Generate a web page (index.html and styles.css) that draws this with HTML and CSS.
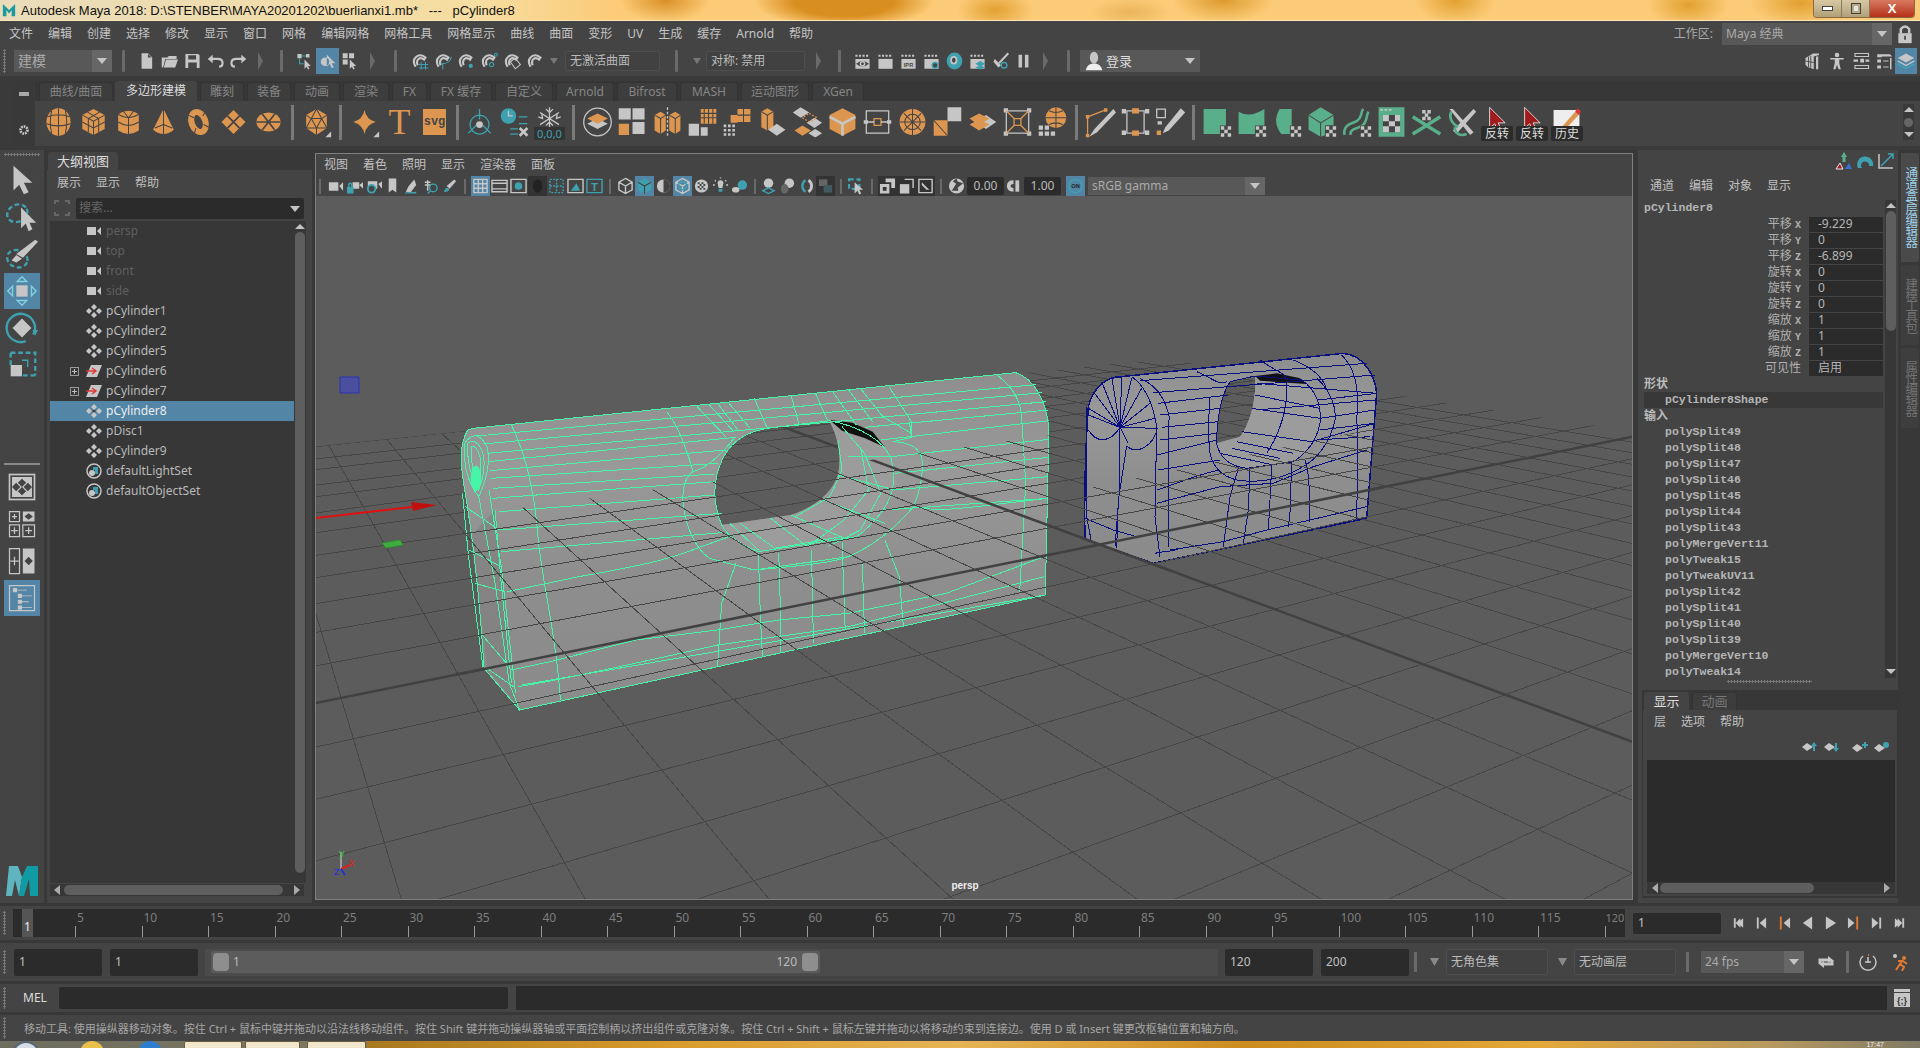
FILE: index.html
```html
<!DOCTYPE html>
<html lang="zh">
<head>
<meta charset="utf-8">
<title>Autodesk Maya 2018</title>
<link rel="stylesheet" href="styles.css">
</head>
<body>
<svg class="defs" aria-hidden="true">
<defs>
<symbol id="sphere" viewBox="0 0 36 36"><ellipse class="o" cx="18" cy="18" rx="14" ry="16"/><path class="d" d="M5 12Q18 7 31 12M4 20Q18 25 32 20M18 2V34M10 5Q7 18 10 31M26 5Q29 18 26 31"/></symbol>
<symbol id="cube" viewBox="0 0 36 36"><path class="o" d="M18 3L31 10V26L18 33L5 26V10Z"/><path class="d" d="M5 10L18 17L31 10M18 17V33M11 6.5L24 14V30M25 6.5L12 14V30M5 18L18 25L31 18"/></symbol>
<symbol id="cyl" viewBox="0 0 36 36"><path class="o" d="M6 9Q18 1 30 9V28Q18 36 6 28Z"/><path class="d" d="M6 9Q18 17 30 9M6 18Q18 26 30 18M18 13V32M11 4L18 13L25 4"/></symbol>
<symbol id="cone" viewBox="0 0 36 36"><path class="o" d="M18 3L30 27Q18 37 6 27Z"/><path class="d" d="M18 3V32M18 21L8 25M18 21L28 25"/></symbol>
<symbol id="torus" viewBox="0 0 36 36"><ellipse class="os" cx="18" cy="18" rx="8" ry="12" transform="rotate(-20 18 18)"/><path class="d" d="M6 10L13 13M27 4L23 11M30 24L24 21M13 32L15 25"/></symbol>
<symbol id="plane" viewBox="0 0 36 36"><path class="o" d="M18 4L32 18L18 32L4 18Z"/><path class="d2" d="M11 11L25 25M25 11L11 25"/></symbol>
<symbol id="disc" viewBox="0 0 36 36"><ellipse class="o" cx="18" cy="18" rx="14" ry="11"/><path class="d2" d="M4 18H32M18 18L11 9M18 18L25 9M18 18L11 27M18 18L25 27"/></symbol>
<symbol id="plato" viewBox="0 0 36 36"><path class="o" d="M18 3L30 10V25L18 33L6 25V10Z"/><path class="d" d="M18 3L12 14H24ZM6 10L12 14M30 10L24 14M12 14L18 25L24 14M6 25H30M12 14L6 25M24 14L30 25M18 25V33"/><path class="w" d="M35 29V36H28Z"/></symbol>
<symbol id="star" viewBox="0 0 36 36"><path class="o" d="M18 4Q20 15 31 18Q20 21 18 32Q16 21 5 18Q16 15 18 4Z"/><path class="w" d="M35 29V36H28Z"/></symbol>
<symbol id="manip" viewBox="0 0 36 36"><path class="t2" d="M18 3V15M14 22L5 31M22 22L31 31"/><circle class="t2" cx="18" cy="21" r="11"/><circle class="w" cx="18" cy="21" r="4"/></symbol>
<symbol id="clockx" viewBox="0 0 36 36"><circle class="t" cx="11" cy="11" r="9"/><path class="ws" d="M11 5V11H16"/><path class="t2" d="M23 12H33M23 20H33M13 26H22M13 32H22"/><path class="w3" d="M24 25L33 34M33 25L24 34"/></symbol>
<symbol id="snow" viewBox="0 0 36 36"><path class="ws" d="M18 1V24M7 7L29 21M29 7L7 21M14 3L18 7L22 3M14 22L18 18L22 22M5 12L10 14L9 9M31 12L26 14L27 9"/></symbol>
<symbol id="combine" viewBox="0 0 36 36"><circle class="ws" cx="18" cy="18" r="16"/><path class="w" d="M18 14L30 20L18 26L6 20Z"/><path class="o" d="M18 8L30 14L18 20L6 14Z"/></symbol>
<symbol id="sep3" viewBox="0 0 36 36"><path class="w" d="M18 2h14v13H18zM2 2h14v13H2zM18 18h14v14H18z"/><path class="o" d="M2 20h12v13H2z"/></symbol>
<symbol id="smooth" viewBox="0 0 36 36"><path class="o" d="M3 10L10 6L16 10V28L10 32L3 28ZM20 10L27 6L33 10V28L27 32L20 28Z"/><path class="d" d="M3 10L10 14L16 10M10 14V32M20 10L27 14L33 10M27 14V32"/><path class="ws" stroke-dasharray="3 2" d="M18 1V35"/></symbol>
<symbol id="subdiv" viewBox="0 0 36 36"><path class="o" d="M16 3H34V20H16Z"/><path class="d" d="M20 3V20M25 3V20M30 3V20M16 8H34M16 13H34"/><path class="w" d="M2 20h12v14H2zM16 24h8v10h-8z"/></symbol>
<symbol id="tri" viewBox="0 0 36 36"><path class="o" d="M18 3H33V18H18ZM10 10H18V19H10Z"/><path class="d" d="M25 3V18M18 10H33"/><path class="w" d="M2 21h3v3H2zM7 21h3v3H7zM12 21h3v3h-3zM2 26h3v3H2zM7 26h3v3H7zM12 26h3v3h-3zM2 31h3v3H2zM7 31h3v3H7zM12 31h3v3h-3z"/></symbol>
<symbol id="extrude" viewBox="0 0 36 36"><path class="o" d="M5 6L12 2L19 6V24L12 28L5 24Z"/><path class="d" d="M5 6L12 10L19 6M12 10V28"/><path class="w" d="M23 20L33 27L23 34L13 27Z"/></symbol>
<symbol id="bridge" viewBox="0 0 36 36"><path class="w" d="M10 1L20 7L10 13L1 7Z"/><path class="o" d="M12 22L22 28L12 34L3 28Z"/><path class="w" d="M26 13L35 19L26 25L17 19ZM27 26L35 31L27 36L19 31Z"/><path class="ot" stroke-dasharray="2 2" d="M20 8L29 13L20 18L12 13Z"/></symbol>
<symbol id="bevel" viewBox="0 0 36 36"><path class="o" d="M18 2L33 10V26L18 34L3 26V10Z"/><path class="w3" d="M3 12L18 20L33 12M18 20V34"/></symbol>
<symbol id="boxc" viewBox="0 0 36 36"><path class="ws" d="M5 5H31V31H5Z"/><path class="w" d="M2 16h5v4H2zM29 16h5v4h-5z"/><path class="ot" d="M14 14h8v8h-8z"/><path class="ws" d="M7 18H14M22 18H29"/></symbol>
<symbol id="discx" viewBox="0 0 36 36"><circle class="o" cx="18" cy="18" r="15"/><path class="d" d="M3 18H33M18 3V33M8 8L28 28M28 8L8 28"/><circle class="d" cx="18" cy="18" r="9"/></symbol>
<symbol id="poke" viewBox="0 0 36 36"><path class="w" d="M18 1H34V17H18ZM18 1L34 17Z"/><path class="o" d="M2 16H18V34H2Z"/><path class="d" d="M2 16L18 34"/></symbol>
<symbol id="wedge" viewBox="0 0 36 36"><path class="w" d="M22 10L34 18L22 26L10 18Z"/><path class="o" d="M14 8L26 14L14 22L3 14ZM14 15L26 21L14 28L3 21Z"/></symbol>
<symbol id="xbox" viewBox="0 0 36 36"><path class="ws" d="M5 5H31V31H5Z"/><path class="w" d="M2 2h5v5H2zM29 2h5v5h-5zM2 29h5v5H2zM29 29h5v5h-5z"/><path class="ot" d="M5 5L14 14M31 5L22 14M5 31L14 22M31 31L22 22M14 14h8v8h-8z"/></symbol>
<symbol id="ballgrid" viewBox="0 0 36 36"><circle class="o" cx="22" cy="13" r="12"/><path class="d" d="M10 13H34M22 1V25M14 5Q22 9 30 5M14 21Q22 17 30 21"/><path class="w" d="M2 22h5v5H2zM9 22h5v5H9zM2 29h5v5H2zM9 29h5v5H9zM16 29h5v5h-5z"/></symbol>
<symbol id="knife" viewBox="0 0 36 36"><path class="ot" d="M3 12L24 4M3 12V34"/><path class="o" d="M1 10h4v4H1zM22 2h4v4h-4zM1 32h4v4H1z"/><path class="w" d="M33 3L36 7L14 30L5 35L11 26Z"/></symbol>
<symbol id="loopc" viewBox="0 0 36 36"><path class="ws" d="M8 5H28V31H8Z"/><path class="w" d="M2 3h5v5H2zM29 3h5v5h-5zM2 28h5v5H2zM29 28h5v5h-5z"/><path class="o" d="M14 2h8v6h-8zM14 28h8v6h-8z"/></symbol>
<symbol id="pencil" viewBox="0 0 36 36"><path class="w" d="M30 2L35 7L16 28L9 31L12 24Z"/><path class="ws" d="M2 3H12V13H2Z"/><path class="o" d="M2 28h5v5H2z"/><path class="w" d="M3 17h5v4H3z"/></symbol>
<symbol id="gquad" viewBox="0 0 36 36"><path class="g" d="M3 3H29V32H3Z"/><use href="#chk"/></symbol>
<symbol id="gcurve" viewBox="0 0 36 36"><path class="g" d="M3 6Q16 14 33 3V32H3Z"/><use href="#chk"/></symbol>
<symbol id="gsplit" viewBox="0 0 36 36"><path class="g" d="M10 3Q1 18 12 32H24V3Z"/><use href="#chk"/></symbol>
<symbol id="gcube" viewBox="0 0 36 36"><path class="g" d="M17 1L32 10V22H23V33L17 35L3 27V10Z"/><path class="d" d="M3 10L17 19L32 10M17 19V35"/><use href="#chk"/></symbol>
<symbol id="gwave" viewBox="0 0 36 36"><path class="gs" d="M4 33C2 20 14 20 18 17C26 12 22 6 26 3M11 33C10 25 20 26 25 22C31 17 29 10 32 6"/><use href="#chk"/></symbol>
<symbol id="gchk" viewBox="0 0 36 36"><path class="g" d="M3 1H33V35H3Z"/><path class="dk" d="M8 10H28V30H8Z"/><path class="w" d="M8 10h7v7H8zM22 10h6v7h-6zM15 17h7v6h-7zM8 23h7v7H8zM22 23h6v7h-6zM5 3h3v2H5zM10 3h3v2h-3zM15 3h3v2h-3z"/></symbol>
<symbol id="gx" viewBox="0 0 36 36"><path class="gs3" d="M2 12L18 22L34 12M2 32L18 22L34 32"/><path class="w" d="M13 4h4v4h-4zM19 4h4v4h-4zM16 8h4v4h-4zM13 12h4v4h-4zM19 12h4v4h-4z"/></symbol>
<symbol id="needle" viewBox="0 0 36 36"><path class="w" d="M32 3L35 6L12 32L8 28Z"/><path class="w" d="M4 3L8 3L32 30L28 33Z"/><path class="gs" d="M6 6Q2 16 14 24M10 24Q12 36 24 32"/></symbol>
<symbol id="redc" viewBox="0 0 36 36"><path class="rc" d="M10 1L10 25L16 20L20 30L24 28L20 19L28 19Z"/></symbol>
<symbol id="hist" viewBox="0 0 36 36"><path class="pg" d="M3 4H33V25L27 31H3Z"/><path class="o" d="M14 22L28 6L32 10L18 25L12 27Z"/><path class="rd" d="M28 6L31 2L35 6L32 10Z"/></symbol>

<symbol id="t-new" viewBox="0 0 24 24"><path class="w" d="M5 1h9l6 6v16H5z"/><path class="dk" d="M14 2v5h5z"/></symbol>
<symbol id="t-open" viewBox="0 0 24 24"><path class="w" d="M1 7h8l2-2h11v4H6L3 21H1zM7 10h17l-4 11H4z"/></symbol>
<symbol id="t-save" viewBox="0 0 24 24"><path class="w" d="M2 2h18l2 2v18H2z"/><path class="dk" d="M6 4h11v6H6zM6 14h12v8H6z"/></symbol>
<symbol id="t-undo" viewBox="0 0 24 24"><path class="w3" d="M6 9H15Q22 9 22 15Q22 20 17 20"/><path class="w" d="M1 9L8 3V15Z"/></symbol>
<symbol id="t-redo" viewBox="0 0 24 24"><path class="w3" d="M18 9H9Q2 9 2 15Q2 20 7 20"/><path class="w" d="M23 9L16 3V15Z"/></symbol>
<symbol id="t-hier" viewBox="0 0 24 24"><path class="w" d="M2 2h6v6H2zM14 2h5v5h-5zM12 10v13l3-3 2 4 2-1-2-4h4z"/><path class="t2" d="M8 5h6M5 8v8h6" /></symbol>
<symbol id="t-obj" viewBox="0 0 24 24"><path class="w" d="M9 7A6 6 0 1 1 8 19A6 6 0 0 1 9 7ZM11 3v17l4-4 3 6 3-1-3-6h5z"/></symbol>
<symbol id="t-comp" viewBox="0 0 24 24"><path class="w" d="M1 1h7v7H1zM10 1h7v7h-7zM1 10h7v7H1zM11 10v13l3-3 2 4 2-1-2-4h4z"/></symbol>
<symbol id="magnet" viewBox="0 0 24 24"><path class="w3" d="M5 20C-2 8 10 -1 19 7L17 10C11 5 5 10 8 18"/></symbol>
<symbol id="s-grid" viewBox="0 0 24 24"><use href="#magnet"/><path class="t2" d="M10 17H23M10 22H23M13 13V24M19 13V24"/></symbol>
<symbol id="s-curve" viewBox="0 0 24 24"><use href="#magnet"/><path class="t2" d="M8 16Q22 16 23 6M11 16V24"/></symbol>
<symbol id="s-pt" viewBox="0 0 24 24"><use href="#magnet"/><circle class="t" cx="18" cy="19" r="3"/></symbol>
<symbol id="s-view" viewBox="0 0 24 24"><use href="#magnet"/><circle class="t2" cx="15" cy="17" r="3"/><circle class="t2" cx="21" cy="3" r="2"/></symbol>
<symbol id="s-plane" viewBox="0 0 24 24"><use href="#magnet"/><path class="ws" d="M9 13L16 8L23 17L16 23Z"/></symbol>
<symbol id="s-live" viewBox="0 0 24 24"><use href="#magnet"/></symbol>
<symbol id="r-base" viewBox="0 0 24 24"><path class="w" d="M2 9H22V23H2Z"/><path class="w" d="M2 3h3v3H2zM7 3h3v3H7zM12 3h3v3h-3zM17 3h3v3h-3z"/></symbol>
<symbol id="r-eye" viewBox="0 0 24 24"><use href="#r-base"/><path class="dk" d="M3 16Q12 8 21 16Q12 24 3 16Z"/><circle class="w" cx="12" cy="16" r="4"/><circle class="dk" cx="12" cy="16" r="2"/></symbol>
<symbol id="r-ipr" viewBox="0 0 24 24"><use href="#r-base"/><text class="iprt" x="12" y="20" text-anchor="middle">IPR</text></symbol>
<symbol id="r-gear" viewBox="0 0 24 24"><use href="#r-base"/><circle class="t2b" cx="17" cy="18" r="4"/></symbol>
<symbol id="r-lens" viewBox="0 0 24 24"><ellipse class="t" cx="12" cy="12" rx="11" ry="12"/><ellipse class="w" cx="11" cy="11" rx="5" ry="6"/><ellipse class="dk" cx="11" cy="11" rx="2.5" ry="3.5"/></symbol>
<symbol id="r-layer" viewBox="0 0 24 24"><use href="#r-base"/><path class="t" d="M16 12L23 16L16 20L9 16ZM16 18L23 21L16 24L9 21Z"/></symbol>
<symbol id="r-brush" viewBox="0 0 24 24"><path class="w3" d="M23 1L10 15"/><path class="w" d="M4 9L13 18L9 21L2 13Z"/><circle class="t2b" cx="17" cy="18" r="4"/></symbol>
<symbol id="r-pause" viewBox="0 0 24 24"><path class="w" d="M5 3h5v18H5zM14 3h5v18h-5z"/></symbol>
<symbol id="r-user" viewBox="0 0 24 24"><ellipse class="w" cx="12" cy="8" rx="5" ry="7"/><path class="pg" d="M2 23Q4 16 10 15H14Q20 16 22 23Z"/></symbol>
<symbol id="r-lock" viewBox="0 0 24 24"><path class="w3" d="M7 11V6Q12 0 17 6V11"/><path class="w" d="M4 11H20V23H4Z"/><path class="dk" d="M11 14h2v5h-2z"/></symbol>
<symbol id="u-model" viewBox="0 0 24 24"><path class="w" d="M2 8L12 2H20V4L13 6V23L5 20L2 17ZM16 6h3v17h-3z"/><path class="d" d="M2 12L13 14M6 6V20M9 5V21"/></symbol>
<symbol id="u-man" viewBox="0 0 24 24"><circle class="w" cx="12" cy="4" r="3"/><path class="w" d="M3 8H21V10H15V15L17 23H14L12 17L10 23H7L9 15V10H3Z"/></symbol>
<symbol id="u-chan" viewBox="0 0 24 24"><path class="ws" d="M4 2H22V6H4ZM4 18H22V22H4Z"/><path class="w" d="M2 10h6v3H2zM11 9h5v5h-5zM18 10h5v3h-5z"/></symbol>
<symbol id="u-attr" viewBox="0 0 24 24"><path class="w" d="M3 3H20L23 6H9V7H3ZM3 10h5v4H3zM3 18h5v4H3zM20 8h2v15h-2z"/><path class="ws" d="M11 12H18M11 20H18"/></symbol>
<symbol id="u-lay" viewBox="0 0 24 24"><path class="w" d="M12 2L23 8L12 14L1 8Z"/><path class="w" d="M1 11L12 17L23 11V13L12 19L1 13Z"/><path class="t3" d="M1 16L12 22L23 16"/></symbol>

<symbol id="l-arrow" viewBox="0 0 36 36"><path class="w" d="M9 3V29L15 23L20 33L25 31L20 21H29Z"/></symbol>
<symbol id="l-lasso" viewBox="0 0 36 36"><ellipse class="td" cx="13" cy="14" rx="11" ry="9" transform="rotate(-25 13 14)"/><path class="w" d="M17 8V30L22 25L25 33L29 31L26 24H33Z"/></symbol>
<symbol id="l-paint" viewBox="0 0 36 36"><ellipse class="td" cx="13" cy="23" rx="11" ry="9" transform="rotate(20 13 23)"/><path class="w" d="M32 3L35 5L19 22L12 18ZM12 19L18 23L12 27L7 25Z"/></symbol>
<symbol id="l-move" viewBox="0 0 36 36"><path class="w" d="M12 12H24V24H12Z"/><path class="ta" d="M13 8L18 3L23 8ZM13 28L18 33L23 28ZM8 13L3 18L8 23ZM28 13L33 18L28 23Z"/></symbol>
<symbol id="l-rot" viewBox="0 0 36 36"><path class="w" d="M18 8L28 18L18 28L8 18Z"/><path class="t3" d="M30 25A15 15 0 1 0 22 32"/><path class="t" d="M29 20H35L32 26Z"/></symbol>
<symbol id="l-scale" viewBox="0 0 36 36"><path class="td" d="M6 5H32V29"/><path class="td" d="M6 5V18M32 29H18"/><path class="w" d="M6 18H18V30H6Z"/><path class="t2" d="M18 13H24V20"/></symbol>
<symbol id="l-single" viewBox="0 0 36 36"><path class="w" d="M2 2H34V34H2Z"/><path class="dk" d="M4 4H32V32H4Z"/><path class="w" d="M6 6H30V30H6Z"/><path class="dk" d="M18 8L23 13L18 18L13 13ZM11 13L16 18L11 23L6 18ZM25 13L30 18L25 23L20 18ZM18 18L23 23L18 28L13 23Z"/></symbol>
<symbol id="l-four" viewBox="0 0 36 36"><path class="ws" d="M3 3H15V15H3ZM3 19H15V33H3ZM19 19H33V33H19ZM9 6V12M6 9H12M9 22V30M5 26H13M26 22V30M22 26H30"/><path class="w" d="M19 3H33V15H19Z"/><path class="dk" d="M26 5L31 9L26 13L21 9Z"/></symbol>
<symbol id="l-two" viewBox="0 0 36 36"><path class="ws" d="M3 3H15V33H3ZM9 13V23M4 18H14"/><path class="w" d="M19 3H33V33H19Z"/><path class="dk" d="M26 13L31 18L26 23L21 18Z"/></symbol>
<symbol id="l-out" viewBox="0 0 36 36"><path class="ws" d="M3 3H33V33H3Z"/><path class="w" d="M7 6h5v5H7zM12 8H24V9H12zM13 13h5v5h-5zM18 15H30V16H18zM13 20h5v5h-5zM18 22H26V23H18zM13 27h5v5h-5zM18 29H30V30H18z"/></symbol>

<symbol id="o-cam" viewBox="0 0 16 16"><path class="w" d="M1 4H10V12H1ZM11 8L15 4V12Z"/></symbol>
<symbol id="o-tr" viewBox="0 0 16 16"><path class="w" d="M8 1L11 4L8 7L5 4ZM3 5L6 8L3 11L0 8ZM13 5L16 8L13 11L10 8ZM8 9L11 12L8 15L5 12Z"/></symbol>
<symbol id="o-sel" viewBox="0 0 16 16"><path class="dk" d="M8 6L10 8L8 10L6 8Z"/><path class="w" d="M8 1L11 4L8 7L5 4ZM3 5L6 8L3 11L0 8ZM13 5L16 8L13 11L10 8ZM8 9L11 12L8 15L5 12Z"/></symbol>
<symbol id="o-grp" viewBox="0 0 16 16"><path class="w" d="M5 2H16L11 14H0Z"/><path class="rl" d="M0 8H9M6 5L10 8L6 11"/></symbol>
<symbol id="o-set" viewBox="0 0 16 16"><circle class="ws" cx="8" cy="8" r="7"/><circle class="w" cx="6" cy="10" r="3"/><path class="t" d="M7 4H12V11H9V7H7Z"/></symbol>

<symbol id="v-cam" viewBox="0 0 18 18"><path class="w" d="M2 5H12V14H2ZM13 9L17 5V14Z"/></symbol>
<symbol id="v-lock" viewBox="0 0 18 18"><path class="w" d="M7 5H14V12H7ZM14 8L18 5V12Z"/><path class="t" d="M1 10H8V17H1Z"/><path class="t2" d="M3 10V7Q4.500 5 6 7V10"/></symbol>
<symbol id="v-gear" viewBox="0 0 18 18"><path class="w" d="M3 4H13V12H3ZM14 7L18 4V12Z"/><circle class="t2b" cx="7" cy="12" r="4"/></symbol>
<symbol id="v-mark" viewBox="0 0 18 18"><path class="w" d="M5 1H13V16L9 13L5 16Z"/></symbol>
<symbol id="v-film" viewBox="0 0 18 18"><path class="w" d="M12 2L14 8L8 16L3 15L6 9Z"/><path class="t" d="M2 16L14 15V17H2Z"/></symbol>
<symbol id="v-look" viewBox="0 0 18 18"><path class="ws" d="M6 8V3M3 5H9M3 8H9M6 8V14"/><circle class="t2" cx="12" cy="11" r="4"/><path class="t2" d="M9 14L6 17"/></symbol>
<symbol id="v-sel" viewBox="0 0 18 18"><path class="w" d="M14 2L16 4L9 12L6 9Z"/><path class="t" d="M3 15Q6 8 9 13Q7 16 3 15Z"/></symbol>
<symbol id="v-grid" viewBox="0 0 18 18"><path class="ws" d="M2 2H16V16H2ZM6.700 2V16M11.300 2V16M2 6.700H16M2 11.300H16"/></symbol>
<symbol id="v-gate" viewBox="0 0 18 18"><path class="ws" d="M1 3H17V15H1ZM1 6H17M1 12H17"/></symbol>
<symbol id="v-res" viewBox="0 0 18 18"><path class="ws" d="M1 2H17V16H1Z"/><circle class="t" cx="9" cy="9" r="4"/></symbol>
<symbol id="v-mask" viewBox="0 0 18 18"><ellipse class="w4" cx="9" cy="9" rx="5" ry="7"/></symbol>
<symbol id="v-field" viewBox="0 0 18 18"><path class="t2d" d="M2 2H16V16H2ZM2 9H16M9 2V16"/></symbol>
<symbol id="v-safe" viewBox="0 0 18 18"><path class="ws" d="M1 2H17V16H1Z"/><path class="t" d="M4 14L10 6L14 14Z"/></symbol>
<symbol id="v-t" viewBox="0 0 18 18"><path class="t2" d="M1 2H17V16H1Z"/><text class="vtt" x="9" y="14" text-anchor="middle">T</text></symbol>
<symbol id="v-wire" viewBox="0 0 18 18"><path class="ws" d="M9 1L16 5V13L9 17L2 13V5ZM2 5L9 9L16 5M9 9V17"/></symbol>
<symbol id="v-shade" viewBox="0 0 18 18"><path class="t3b" d="M9 1L16 5V13L9 17L2 13V5Z"/><path class="d" d="M2 5L9 9L16 5M9 9V17"/></symbol>
<symbol id="v-half" viewBox="0 0 18 18"><circle class="w" cx="9" cy="9" r="7"/><path class="dk" d="M9 2A7 7 0 0 1 9 16Z"/></symbol>
<symbol id="v-xray" viewBox="0 0 18 18"><path class="ws" d="M9 1L16 5V13L9 17L2 13V5ZM2 5L9 9L16 5M9 9V17"/><path class="t2" d="M9 4L13 6V11L9 13L5 11V6Z"/></symbol>
<symbol id="v-chk" viewBox="0 0 18 18"><circle class="w" cx="9" cy="9" r="7"/><path class="dk" d="M5 5h2v2H5zM9 5h2v2H9zM7 7h2v2H7zM11 7h2v2h-2zM5 9h2v2H5zM9 9h2v2H9zM7 11h2v2H7zM11 11h2v2h-2z"/></symbol>
<symbol id="v-bulb" viewBox="0 0 18 18"><path class="w" d="M6 6A3 3 0 1 1 12 6L11 11H7Z"/><path class="ws" d="M9 0V1M3 3L4 4M15 3L14 4M1 8H3M15 8H17"/><path class="t" d="M7 12h4v3H7z"/></symbol>
<symbol id="v-shadow" viewBox="0 0 18 18"><circle class="t" cx="12" cy="8" r="5"/><ellipse class="w" cx="5" cy="13" rx="4" ry="3"/></symbol>
<symbol id="v-ball" viewBox="0 0 18 18"><circle class="w" cx="9" cy="6" r="5"/><path class="t2" d="M3 14L9 11L15 14L9 17Z"/></symbol>
<symbol id="v-ballg" viewBox="0 0 18 18"><circle class="w" cx="11" cy="6" r="5"/><ellipse class="g5" cx="6" cy="12" rx="4" ry="5"/></symbol>
<symbol id="v-ring" viewBox="0 0 18 18"><path class="t3" d="M8 3A7 7 0 0 0 8 15"/><path class="w3" d="M11 3A7 7 0 0 1 11 15"/></symbol>
<symbol id="v-dark" viewBox="0 0 18 18"><path class="g5" d="M2 2H11V9H2Z"/><path class="t5" d="M7 8H16V16H7Z"/></symbol>
<symbol id="v-pick" viewBox="0 0 18 18"><path class="td" d="M1 2H12V12H1Z"/><path class="w" d="M7 5V17L10 14L12 18L14 17L12 13H16Z"/></symbol>
<symbol id="v-iso" viewBox="0 0 18 18"><path class="w" d="M7 1H17V11H13V5H7Z"/><path class="w" d="M1 7H11V17H1ZM4 10V14H8V10Z"/></symbol>
<symbol id="v-iso2" viewBox="0 0 18 18"><path class="ws" d="M7 2H16V11"/><path class="w" d="M2 7H12V17H2Z"/></symbol>
<symbol id="v-exp" viewBox="0 0 18 18"><path class="ws" d="M2 2H16V16H2Z"/><path class="w" d="M5 5L13 13H10L5 8Z"/></symbol>
<symbol id="v-aper" viewBox="0 0 18 18"><circle class="w" cx="9" cy="9" r="8"/><path class="dk" d="M9 1L12 9L5 4ZM16 6L9 12V4ZM4 14L9 6L11 14Z"/></symbol>
<symbol id="v-gam" viewBox="0 0 18 18"><path class="w" d="M9 3Q2 3 2 9T9 15V11Q6 11 6 9T9 7Z"/><path class="w" d="M11 3H15V15H11Z"/></symbol>
<symbol id="v-on" viewBox="0 0 18 18"><circle class="t2" cx="9" cy="9" r="7"/><text class="ont" x="9" y="11.500" text-anchor="middle">ON</text></symbol>

<symbol id="p-start" viewBox="0 0 14 14"><path class="w" d="M2 2H4V12H2ZM6 7L12 2V12Z M4 7L9 2V12Z"/></symbol>
<symbol id="p-prev" viewBox="0 0 14 14"><path class="w" d="M2 1H4V13H2ZM12 1V13L5 7Z"/></symbol>
<symbol id="p-pk" viewBox="0 0 14 14"><path class="or" d="M2 0H4V14H2Z"/><path class="w" d="M13 1V13L6 7Z"/></symbol>
<symbol id="p-back" viewBox="0 0 14 14"><path class="w" d="M12 0V14L2 7Z"/></symbol>
<symbol id="p-play" viewBox="0 0 14 14"><path class="w" d="M2 0V14L13 7Z"/></symbol>
<symbol id="p-nk" viewBox="0 0 14 14"><path class="or" d="M10 0H12V14H10Z"/><path class="w" d="M1 1V13L8 7Z"/></symbol>
<symbol id="p-next" viewBox="0 0 14 14"><path class="w" d="M10 1H12V13H10ZM2 1V13L9 7Z"/></symbol>
<symbol id="p-end" viewBox="0 0 14 14"><path class="w" d="M10 2H12V12H10ZM8 7L2 2V12ZM10 7L5 2V12Z"/></symbol>
<symbol id="p-loop" viewBox="0 0 18 18"><path class="w3" d="M3 11V7H12M15 7V11H6"/><path class="w" d="M11 3L16 7L11 10ZM7 8L2 11L7 15Z"/></symbol>
<symbol id="p-clock" viewBox="0 0 18 18"><path class="ws" d="M4 3A8 8 0 1 0 14 3M9 4V10M6 9H12"/><path class="or" d="M9 1h1v2H9z"/></symbol>
<symbol id="p-run" viewBox="0 0 18 18"><circle class="w" cx="4" cy="3" r="2"/><circle class="or" cx="13" cy="5" r="2"/><path class="ors" d="M12 7L9 11L13 14L11 18M9 11L5 17M12 8L16 11M11 8L7 8"/></symbol>
<symbol id="p-script" viewBox="0 0 18 18"><path class="w" d="M1 0H17V18H1Z"/><path class="dk" d="M1 3H17V4H1Z"/><text class="vtk" x="9" y="15" text-anchor="middle">{;}</text></symbol>
<g id="chk"><path class="dk" d="M22 22H36V36H22Z"/><path class="w" d="M23 23h4v4h-4zM31 23h4v4h-4zM27 27h4v4h-4zM23 31h4v4h-4zM31 31h4v4h-4z"/></g>
</defs>
</svg>

<div class="app">
  <header class="titlebar">
    <svg class="mlogo-s" viewBox="0 0 16 16"><path class="mt" d="M1 15V1L8 8L15 1V15H11V8L8 12L5 8V15Z"/></svg>
    <span class="wintitle">Autodesk Maya 2018: D:\STENBER\MAYA20201202\buerlianxi1.mb*&nbsp;&nbsp;&nbsp;---&nbsp;&nbsp;&nbsp;pCylinder8</span>
    <div class="winbtns">
      <span class="wb wb-min"><i class="gmin"></i></span>
      <span class="wb wb-max"><i class="gmax"></i></span>
      <span class="wb wb-close">X</span>
    </div>
  </header>

  <nav class="menubar">
    <span>文件</span><span>编辑</span><span>创建</span><span>选择</span><span>修改</span><span>显示</span><span>窗口</span><span>网格</span><span>编辑网格</span><span>网格工具</span><span>网格显示</span><span>曲线</span><span>曲面</span><span>变形</span><span>UV</span><span>生成</span><span>缓存</span><span>Arnold</span><span>帮助</span>
    <div class="wsp">
      <span class="wsp-l">工作区:</span>
      <div class="drop drop-ws"><span class="drop-t">Maya 经典</span><i class="drop-a"></i></div>
      <svg class="ic-lock"><use href="#r-lock"/></svg>
    </div>
  </nav>

  <div class="toolbar">
    <i class="grip"></i>
    <div class="drop drop-mode"><span class="drop-t">建模</span><i class="drop-a"></i></div>
    <i class="tsep"></i>
    <svg class="tic"><use href="#t-new"/></svg><svg class="tic"><use href="#t-open"/></svg><svg class="tic"><use href="#t-save"/></svg><svg class="tic"><use href="#t-undo"/></svg><svg class="tic"><use href="#t-redo"/></svg>
    <i class="tarr"></i><i class="tsep"></i>
    <svg class="tic"><use href="#t-hier"/></svg><svg class="tic on"><use href="#t-obj"/></svg><svg class="tic"><use href="#t-comp"/></svg>
    <i class="tarr"></i><i class="tsep tsep-w"></i>
    <svg class="tic"><use href="#s-grid"/></svg><svg class="tic"><use href="#s-curve"/></svg><svg class="tic"><use href="#s-pt"/></svg><svg class="tic"><use href="#s-view"/></svg><svg class="tic"><use href="#s-plane"/></svg><svg class="tic"><use href="#s-live"/></svg>
    <i class="ttri"></i>
    <div class="box box-live">无激活曲面</div>
    <i class="tsep tsep-a"></i>
    <i class="ttri"></i>
    <div class="box box-sym">对称: 禁用</div>
    <i class="tarr tarr-s"></i><i class="tsep"></i>
    <svg class="tic"><use href="#r-eye"/></svg><svg class="tic"><use href="#r-base"/></svg><svg class="tic"><use href="#r-ipr"/></svg><svg class="tic"><use href="#r-gear"/></svg><svg class="tic"><use href="#r-lens"/></svg><svg class="tic"><use href="#r-layer"/></svg><svg class="tic"><use href="#r-brush"/></svg><svg class="tic"><use href="#r-pause"/></svg>
    <i class="tarr"></i><i class="tsep tsep-b"></i>
    <div class="drop drop-login"><svg class="ulogin"><use href="#r-user"/></svg><span class="drop-t">登录</span><i class="drop-a flat"></i></div>
    <div class="tright">
      <svg class="uic"><use href="#u-model"/></svg><svg class="uic"><use href="#u-man"/></svg><svg class="uic"><use href="#u-chan"/></svg><svg class="uic nar"><use href="#u-attr"/></svg><svg class="uic nar on"><use href="#u-lay"/></svg>
    </div>
  </div>

  <div class="shelfwrap">
    <div class="shelfctl"><i class="dash"></i><svg class="gearmini" viewBox="0 0 16 16"><circle class="gr" cx="8" cy="8" r="4"/></svg></div>
    <div class="shelfmain">
      <div class="tabs">
        <span class="tab t74">曲线/曲面</span><span class="tab t82 act">多边形建模</span><span class="tab t44 ml">雕刻</span><span class="tab t44 ml">装备</span><span class="tab t46 ml">动画</span><span class="tab t46 ml">渲染</span><span class="tab t35 ml">FX</span><span class="tab t62 ml">FX 缓存</span><span class="tab t58 ml">自定义</span><span class="tab t58 ml">Arnold</span><span class="tab t60 ml">Bifrost</span><span class="tab t58 ml">MASH</span><span class="tab t68 ml">运动图形</span><span class="tab t52 ml">XGen</span>
      </div>
      <div class="shelf">
        <svg class="sic"><use href="#sphere"/></svg><svg class="sic"><use href="#cube"/></svg><svg class="sic"><use href="#cyl"/></svg><svg class="sic"><use href="#cone"/></svg><svg class="sic"><use href="#torus"/></svg><svg class="sic"><use href="#plane"/></svg><svg class="sic"><use href="#disc"/></svg>
        <i class="ssep"></i>
        <svg class="sic"><use href="#plato"/></svg>
        <i class="ssep"></i>
        <svg class="sic"><use href="#star"/></svg>
        <span class="sic-t"><span class="bigT">T</span></span>
        <span class="sic-t"><span class="svgbox">svg</span></span>
        <i class="ssep ssep-m"></i>
        <svg class="sic"><use href="#manip"/></svg><svg class="sic"><use href="#clockx"/></svg>
        <span class="sic-t lab"><svg class="sic"><use href="#snow"/></svg><span class="zero">0,0,0</span></span>
        <i class="ssep"></i>
        <svg class="sic"><use href="#combine"/></svg><svg class="sic"><use href="#sep3"/></svg><svg class="sic"><use href="#smooth"/></svg><svg class="sic"><use href="#subdiv"/></svg><svg class="sic"><use href="#tri"/></svg><svg class="sic"><use href="#extrude"/></svg><svg class="sic"><use href="#bridge"/></svg><svg class="sic"><use href="#bevel"/></svg><svg class="sic"><use href="#boxc"/></svg><svg class="sic"><use href="#discx"/></svg><svg class="sic"><use href="#poke"/></svg><svg class="sic"><use href="#wedge"/></svg><svg class="sic"><use href="#xbox"/></svg><svg class="sic"><use href="#ballgrid"/></svg>
        <i class="ssep"></i>
        <svg class="sic"><use href="#knife"/></svg><svg class="sic"><use href="#loopc"/></svg><svg class="sic"><use href="#pencil"/></svg>
        <i class="ssep ssep-n"></i>
        <svg class="sic"><use href="#gquad"/></svg><svg class="sic"><use href="#gcurve"/></svg><svg class="sic"><use href="#gsplit"/></svg><svg class="sic"><use href="#gcube"/></svg><svg class="sic"><use href="#gwave"/></svg><svg class="sic"><use href="#gchk"/></svg><svg class="sic"><use href="#gx"/></svg><svg class="sic"><use href="#needle"/></svg>
        <span class="sic-t lab"><svg class="sic"><use href="#redc"/></svg><span class="slabel">反转</span></span>
        <span class="sic-t lab"><svg class="sic"><use href="#redc"/></svg><span class="slabel">反转</span></span>
        <span class="sic-t lab"><svg class="sic"><use href="#hist"/></svg><span class="slabel">历史</span></span>
        <div class="shelfscroll"><i class="sup"></i><i class="sdot"></i><i class="sdn"></i></div>
      </div>
    </div>
  </div>

  <main class="main">
    <aside class="toolbox">
      <i class="hgrip"></i>
      <svg class="lic"><use href="#l-arrow"/></svg><svg class="lic"><use href="#l-lasso"/></svg><svg class="lic"><use href="#l-paint"/></svg><svg class="lic on"><use href="#l-move"/></svg><svg class="lic"><use href="#l-rot"/></svg><svg class="lic"><use href="#l-scale"/></svg>
      <i class="lsep"></i>
      <svg class="lay"><use href="#l-single"/></svg><svg class="lay"><use href="#l-four"/></svg><svg class="lay"><use href="#l-two"/></svg><svg class="lay on"><use href="#l-out"/></svg>
      <svg class="mlogo" viewBox="0 0 32 30"><path class="ml1" d="M0 30L3 0H12L16 11L13 30L9 14L6 30Z"/><path class="ml2" d="M16 11L21 0H32V30H24L23 13L18 30H13Z"/></svg>
    </aside>

    <section class="outliner">
      <div class="otab-row"><span class="otab">大纲视图</span></div>
      <div class="opanel">
        <div class="pmenu omenu"><span>展示</span><span>显示</span><span>帮助</span></div>
        <div class="osearch"><svg class="osi" viewBox="0 0 16 16"><path class="fr" d="M1 4V1H5M11 1H15V4M15 12V15H11M5 15H1V12"/></svg><div class="oinput"><span>搜索...</span><i class="drop-tri"></i></div></div>
        <div class="olistwrap">
          <ul class="olist">
            <li class="dim"><svg class="oic"><use href="#o-cam"/></svg>persp</li>
            <li class="dim"><svg class="oic"><use href="#o-cam"/></svg>top</li>
            <li class="dim"><svg class="oic"><use href="#o-cam"/></svg>front</li>
            <li class="dim"><svg class="oic"><use href="#o-cam"/></svg>side</li>
            <li><svg class="oic"><use href="#o-tr"/></svg>pCylinder1</li>
            <li><svg class="oic"><use href="#o-tr"/></svg>pCylinder2</li>
            <li><svg class="oic"><use href="#o-tr"/></svg>pCylinder5</li>
            <li class="exp"><i class="plus"></i><svg class="oic"><use href="#o-grp"/></svg>pCylinder6</li>
            <li class="exp"><i class="plus"></i><svg class="oic"><use href="#o-grp"/></svg>pCylinder7</li>
            <li class="sel"><svg class="oic"><use href="#o-sel"/></svg>pCylinder8</li>
            <li><svg class="oic"><use href="#o-tr"/></svg>pDisc1</li>
            <li><svg class="oic"><use href="#o-tr"/></svg>pCylinder9</li>
            <li><svg class="oic"><use href="#o-set"/></svg>defaultLightSet</li>
            <li><svg class="oic"><use href="#o-set"/></svg>defaultObjectSet</li>
          </ul>
          <div class="vscroll"><i class="sup"></i><i class="vthumb"></i></div>
        </div>
        <div class="hscroll hs-o"><i class="harrl"></i><i class="hthumb"></i><i class="harrr"></i></div>
      </div>
    </section>

    <section class="viewport">
      <div class="pmenu vmenu"><span>视图</span><span>着色</span><span>照明</span><span>显示</span><span>渲染器</span><span>面板</span></div>
      <div class="vtools">
        <i class="vsep vs0"></i>
        <svg class="vic"><use href="#v-cam"/></svg><svg class="vic"><use href="#v-lock"/></svg><svg class="vic"><use href="#v-gear"/></svg><svg class="vic"><use href="#v-mark"/></svg><svg class="vic"><use href="#v-film"/></svg><svg class="vic"><use href="#v-look"/></svg><svg class="vic"><use href="#v-sel"/></svg>
        <i class="vsep"></i>
        <svg class="vic on"><use href="#v-grid"/></svg><svg class="vic"><use href="#v-gate"/></svg><svg class="vic"><use href="#v-res"/></svg><svg class="vic drk"><use href="#v-mask"/></svg><svg class="vic"><use href="#v-field"/></svg><svg class="vic"><use href="#v-safe"/></svg><svg class="vic"><use href="#v-t"/></svg>
        <i class="vsep"></i>
        <svg class="vic"><use href="#v-wire"/></svg><svg class="vic on"><use href="#v-shade"/></svg><svg class="vic"><use href="#v-half"/></svg><svg class="vic on"><use href="#v-xray"/></svg><svg class="vic"><use href="#v-chk"/></svg><svg class="vic"><use href="#v-bulb"/></svg><svg class="vic"><use href="#v-shadow"/></svg>
        <i class="vsep vsm"></i>
        <svg class="vic"><use href="#v-ball"/></svg><svg class="vic"><use href="#v-ballg"/></svg><svg class="vic"><use href="#v-ring"/></svg><svg class="vic drk"><use href="#v-dark"/></svg>
        <i class="vsep"></i>
        <svg class="vic"><use href="#v-pick"/></svg>
        <i class="vsep"></i>
        <svg class="vic drk2"><use href="#v-iso"/></svg><svg class="vic drk2"><use href="#v-iso2"/></svg><svg class="vic drk2"><use href="#v-exp"/></svg>
        <i class="vsep"></i>
        <svg class="vic"><use href="#v-aper"/></svg>
        <span class="vnum">0.00</span>
        <svg class="vic"><use href="#v-gam"/></svg>
        <span class="vnum">1.00</span>
        <svg class="vic on von"><use href="#v-on"/></svg>
        <div class="drop drop-srgb"><span class="drop-t">sRGB gamma</span><i class="drop-a"></i></div>
      </div>
      <svg class="canvas" viewBox="316 196 1316 703">
        <defs>
          <clipPath id="gridclip"><polygon points="315,446.700 1162,359 1635,432 1635,905 315,905"/></clipPath>
          <clipPath id="gfront"><polygon points="455,517 1052,435 1052,720 455,720"/></clipPath>
          <clipPath id="bfront"><polygon points="1080,490 1382,427 1382,572 1080,572"/></clipPath>
          <linearGradient id="gbody" x1="0" y1="0" x2="0" y2="1"><stop offset="0" stop-color="#8e8e8e"/><stop offset=".28" stop-color="#999"/><stop offset=".6" stop-color="#8e8e8e"/><stop offset="1" stop-color="#8b8b8b"/></linearGradient>
          <g id="gridg" clip-path="url(#gridclip)">
            <path class="gl" d="M315 446.700L1635 308.600M315 459L1635 314.800M315 469.700L1635 320.100M315 485.200L1635 327.800M315 496.800L1635 333.600M315 513L1635 341.600M315 532.800L1635 351.500M315 555.500L1635 362.800M315 577.800L1635 373.800M315 603.800L1635 386.800M315 632.600L1635 401.100M315 666L1635 417.700M315 747.200L1635 458.100M315 799.500L1635 484.100M315 861L1635 514.700M315 935L1635 551.500M315 1023L1635 595.200M315 1128L1635 647.500M315 1253L1635 709.600M315 1402L1635 783.700M315 1579L1635 871.700M315 1790L1635 976.700"/>
            <path class="gl" d="M195 209L403 905M195 209L588.500 905M195 209L774 905M195 209L959.500 905M195 209L1145 905M195 209L1330.500 905M195 209L1516 905M195 209L1701.500 905M195 209L1887 905M195 209L2258 905M195 209L2443.500 905M195 209L2629 905M195 209L2814.500 905M195 209L3000 905M195 209L3185.500 905M195 209L3371 905M195 209L3556.500 905M195 209L3742 905M195 209L3927.500 905M195 209L4113 905M195 209L4298.500 905M195 209L4484 905"/>
            <path class="gt" d="M315 703.200L1635 436.200M195 209L2072.500 905"/>
          </g>
        </defs>
        <rect x="316" y="196" width="1316" height="703" class="vbg"/>
        <use href="#gridg"/>

        <g transform="translate(440 350) scale(.40816 .33333)">
          <path class="body" fill-rule="evenodd" d="M195 1080L108 955C100 800 85 600 62 430C48 340 48 280 68 240L80 235L1410 68C1455 85 1485 150 1492 235L1483 735ZM690 525C665 450 670 380 695 320C720 265 760 240 820 232L955 215C975 260 985 320 975 375C960 430 920 470 860 495Z"/>
          <path class="wall" d="M955 215L1040 235L1085 280L1105 325L1115 400L1080 490L1030 555L780 605L735 580L690 525L860 495C920 470 960 430 975 375C985 320 975 260 955 215Z"/>
          <path class="blk" d="M955 210L1010 218L1060 245L1090 292L1040 264L985 242Z"/>
          <path class="sidef" d="M135 480L150 640L175 1000L195 1075L115 955L100 800L75 560Z"/>
          <path class="gw" d="M195 1080L108 955C100 800 85 600 62 430C48 340 48 280 68 240L80 235L1410 68C1455 85 1485 150 1492 235L1483 735Z"/>
          <path class="gw" d="M690 525C665 450 670 380 695 320C720 265 760 240 820 232L955 212C1030 230 1085 270 1105 325C1120 390 1110 440 1080 490C1060 520 1040 545 1020 560L780 605C745 590 705 560 690 525Z"/>
          <path class="gw" d="M90 258L1460 104M105 282L1476 128M115 310L820 232L1484 155M118 335L725 262M122 362L700 300M125 385L682 340M130 415L672 372M128 445L672 395M145 485L672 435M145 540L690 490M150 605L690 548M1040 232L1490 180M1080 270L1492 212M1105 320L1492 268M1115 370L1490 322M1110 420L1490 380M1090 480L1490 445"/>
          <path class="gw" d="M165 725L340 680C480 650 560 630 640 590L720 555M190 1010C300 990 480 940 680 885L1000 830L1200 770L1480 680M175 960L270 935L480 870L680 840L830 810L1000 790L1240 730L1480 620M770 660L1000 620M1160 470C1230 490 1300 470 1490 445M200 1005L1483 735"/>
          <path class="gw" d="M720 265C680 330 640 360 620 365C600 380 595 420 595 450C600 520 620 590 660 625L770 660C860 650 960 640 1000 620C1060 590 1120 530 1160 470C1180 410 1185 360 1180 320C1170 290 1150 278 1110 275L1155 262L1150 215"/>
          <path class="gw" d="M975 270L985 360L955 440L870 500M1030 290L1050 420L990 510L900 590M1040 310L1080 430L1030 540L950 590M940 450L1090 520M975 375L1115 420M1000 320L1105 320M860 495L1000 570M810 505L900 590M710 520L780 600M985 230L1040 310M735 520L820 595L985 560"/>
          <path class="gw" d="M175 225C205 300 230 400 240 560C250 700 285 850 295 1050M555 185C580 220 600 280 620 365M630 170L700 260M660 165L720 245M680 160L730 240M705 155L760 235M770 145L800 230M860 135L880 225M920 130L950 212M960 122L1020 225M1000 118L1060 215M1030 115L1085 200L1155 250M1100 110L1155 215L1155 262M1365 75C1400 110 1420 140 1425 200L1435 400L1420 730M725 640L690 760L680 950M780 610L785 800L790 920M830 610L835 820L835 905M910 600L915 880M985 575L993 850M1035 640L1040 850M1090 570L1125 680L1135 825"/>
          <path class="gw" d="M55 430L70 620L105 950M95 440L135 700L170 1000L195 1080M120 420L150 650L185 1030M135 480L150 700L175 1000M62 470L145 540M72 600L150 650M85 700L160 725M100 850L170 950M115 955L180 1010"/>
          <path class="gw" d="M60 280Q90 230 115 290Q128 350 95 440Q55 380 60 280M68 280Q90 260 105 310Q115 360 95 420Q65 360 68 280M76 290Q90 285 98 320Q104 370 95 405Q75 360 76 290"/>
          <ellipse class="gdot" cx="88" cy="385" rx="13" ry="38"/>
        </g>

        <g transform="translate(1060 340) scale(.33333)">
          <path class="body" fill-rule="evenodd" d="M280 670L75 598C72 450 78 300 85 200C100 140 140 110 185 110L850 40C910 45 945 105 950 160L920 535ZM470 310C470 250 480 170 510 125L585 110C590 180 570 250 540 290Z"/>
          <path class="wall" d="M585 110L725 120C770 150 785 200 780 250C770 300 740 340 700 365L560 385L500 370L470 310L540 290C570 250 590 180 585 110Z"/>
          <path class="blk" d="M585 108L650 100L720 115L738 132L600 122Z"/>
          <path class="bw2" d="M280 670L75 598C72 450 78 300 85 200C100 140 140 110 185 110L850 40C910 45 945 105 950 160L920 535Z"/>
          <path class="bw" d="M470 310C470 250 480 170 510 125L585 108L725 120C770 150 785 200 780 250C770 300 740 340 700 365L560 385C520 380 480 360 470 310Z"/>
          <path class="bw" d="M240 122L920 70M280 158L945 105M295 190L505 165M300 225L480 205M305 262L475 245M300 300L470 280M590 130L950 160L775 180M585 165L780 205M575 205L780 235L945 210M545 275L755 305L945 250M530 305L700 340M515 325L660 355M480 340L640 375M780 270L945 250M770 300L930 290M590 210L945 180"/>
          <path class="bw" d="M292 345L470 300M295 390L480 360M290 450C340 435 420 400 480 390M290 490L480 440L640 430L760 380L920 330M330 630L490 605L620 570L750 540L920 500M285 640C320 630 330 640 360 625M75 535L160 570L230 590M75 598L170 630"/>
          <path class="bw" d="M450 170C445 240 445 300 450 340C460 385 490 410 530 420C590 430 660 420 720 385C770 360 810 310 825 240C830 190 800 140 770 115M410 95C450 110 480 140 500 125M700 60C750 80 790 110 800 150M600 60C640 90 680 100 680 120M680 130C685 200 660 280 620 340M845 45C880 80 900 130 890 240C900 320 890 450 890 540M290 260C280 200 260 140 215 110M330 240C320 190 300 140 240 115"/>
          <path class="bw" d="M535 385L510 470L490 620M570 385L565 510L550 610M635 375L630 480L625 570M695 365L690 520L685 560M735 360C755 420 745 500 748 545M325 240V620M290 260L285 530L300 650M80 200V530L95 610M180 262V430L165 620M200 318L175 480L170 625"/>
          <path class="bw" d="M85 205L180 262L292 265M100 155L180 262M125 125L180 262M155 112L180 262M185 112L180 262M215 115L180 262M245 145L180 262M270 190L180 262M285 235L180 262M85 225L180 262M85 270C110 310 150 310 180 262M200 318C230 345 280 320 292 265M180 262L205 310"/>
          <circle class="bdot" cx="181" cy="262" r="3"/><circle class="bdot" cx="88" cy="206" r="2.500"/>
        </g>

        <use href="#gridg" clip-path="url(#gfront)"/>
        <use href="#gridg" clip-path="url(#bfront)"/>

        <path class="bs" d="M340 377H359V393H340Z"/>
        <path class="xl" d="M315 518L412 507"/>
        <path class="xc" d="M411 502L437 505L413 511Z"/>
        <path class="yc" d="M382 543L400 540L403 545L386 548Z"/>
        <path class="ax-y" d="M341 852V869"/><path class="ax-x" d="M341 869L350 865"/><path class="ax-z" d="M341 869L345 875"/>
        <text class="axy" x="339" y="857">y</text><text class="axx" x="349" y="866">x</text><text class="axz" x="334" y="875">z</text>
        <text class="persp" x="965" y="889" text-anchor="middle">persp</text>
      </svg>
    </section>

    <section class="channel">
      <div class="ctop"><svg class="cti" viewBox="0 0 18 18"><path class="gs" d="M9 3V10"/><path class="g" d="M6 5L9 0L12 5Z"/><path class="rc" d="M1 17L5 11L8 17Z"/><path class="bf" d="M10 17L14 11L17 17Z"/></svg><svg class="cti" viewBox="0 0 18 18"><path class="t3b" d="M2 16A8 8 0 1 1 17 14H13A4 4 0 1 0 6 16Z"/></svg><svg class="cti" viewBox="0 0 18 18"><path class="ws" d="M2 2V16H16"/><path class="t2" d="M4 14L16 2M11 2H16V7"/></svg></div>
      <div class="pmenu cmenu"><span>通道</span><span>编辑</span><span>对象</span><span>显示</span></div>
      <div class="cbody">
        <div class="clist">
          <div class="objname">pCylinder8</div>
          <div class="attr"><span class="attr-l">平移 <b>X</b></span><span class="attr-v">-9.229</span></div>
          <div class="attr"><span class="attr-l">平移 <b>Y</b></span><span class="attr-v">0</span></div>
          <div class="attr"><span class="attr-l">平移 <b>Z</b></span><span class="attr-v">-6.899</span></div>
          <div class="attr"><span class="attr-l">旋转 <b>X</b></span><span class="attr-v">0</span></div>
          <div class="attr"><span class="attr-l">旋转 <b>Y</b></span><span class="attr-v">0</span></div>
          <div class="attr"><span class="attr-l">旋转 <b>Z</b></span><span class="attr-v">0</span></div>
          <div class="attr"><span class="attr-l">缩放 <b>X</b></span><span class="attr-v">1</span></div>
          <div class="attr"><span class="attr-l">缩放 <b>Y</b></span><span class="attr-v">1</span></div>
          <div class="attr"><span class="attr-l">缩放 <b>Z</b></span><span class="attr-v">1</span></div>
          <div class="attr"><span class="attr-l">可见性</span><span class="attr-v">启用</span></div>
          <div class="chead">形状</div>
          <div class="node shape">pCylinder8Shape</div>
          <div class="chead">输入</div>
          <div class="node">polySplit49</div><div class="node">polySplit48</div><div class="node">polySplit47</div><div class="node">polySplit46</div><div class="node">polySplit45</div><div class="node">polySplit44</div><div class="node">polySplit43</div><div class="node">polyMergeVert11</div><div class="node">polyTweak15</div><div class="node">polyTweakUV11</div><div class="node">polySplit42</div><div class="node">polySplit41</div><div class="node">polySplit40</div><div class="node">polySplit39</div><div class="node">polyMergeVert10</div><div class="node">polyTweak14</div>
        </div>
        <div class="cscroll"><i class="sup"></i><i class="cthumb"></i><i class="sdn"></i></div>
      </div>
      <i class="cgrip"></i>
      <div class="layers">
        <div class="ltabs"><span class="ltab act">显示</span><span class="ltab">动画</span></div>
        <div class="lbody">
          <div class="pmenu lmenu"><span>层</span><span>选项</span><span>帮助</span></div>
          <div class="lics">
            <svg class="lli" viewBox="0 0 16 10"><path class="w" d="M0 5L5 1L11 5L5 9Z"/><path class="t" d="M12 0L15 4H13V9H11V4H9Z"/></svg>
            <svg class="lli" viewBox="0 0 16 10"><path class="w" d="M0 5L5 1L11 5L5 9Z"/><path class="t" d="M11 1H13V6H15L12 10L9 6H11Z"/></svg>
            <svg class="lli gap" viewBox="0 0 16 10"><path class="w" d="M0 6L5 2L11 6L5 10Z"/><path class="t" d="M10 2H12V0H14V2H16V4H14V6H12V4H10Z"/></svg>
            <svg class="lli" viewBox="0 0 16 10"><path class="w" d="M0 6L5 2L11 6L5 10Z"/><circle class="t" cx="12" cy="3" r="3"/></svg>
          </div>
          <div class="llist"></div>
          <div class="hscroll hs-l"><i class="harrl"></i><i class="hthumb"></i><i class="harrr"></i></div>
        </div>
      </div>
    </section>

    <aside class="sidetabs">
      <span class="stab act s1">通道盒/层编辑器</span>
      <span class="stab s2">建模工具包</span>
      <span class="stab s3">属性编辑器</span>
    </aside>
  </main>

  <div class="timerow">
    <i class="grip gs1"></i>
    <div class="track">
      <div class="tfirst"><span class="curf">1</span></div>
      <div class="tc"><span>5</span><i></i></div><div class="tc"><span>10</span><i></i></div><div class="tc"><span>15</span><i></i></div><div class="tc"><span>20</span><i></i></div><div class="tc"><span>25</span><i></i></div><div class="tc"><span>30</span><i></i></div><div class="tc"><span>35</span><i></i></div><div class="tc"><span>40</span><i></i></div><div class="tc"><span>45</span><i></i></div><div class="tc"><span>50</span><i></i></div><div class="tc"><span>55</span><i></i></div><div class="tc"><span>60</span><i></i></div><div class="tc"><span>65</span><i></i></div><div class="tc"><span>70</span><i></i></div><div class="tc"><span>75</span><i></i></div><div class="tc"><span>80</span><i></i></div><div class="tc"><span>85</span><i></i></div><div class="tc"><span>90</span><i></i></div><div class="tc"><span>95</span><i></i></div><div class="tc"><span>100</span><i></i></div><div class="tc"><span>105</span><i></i></div><div class="tc"><span>110</span><i></i></div><div class="tc"><span>115</span><i></i></div><div class="tc tc-last"><span>120</span><i></i></div>
    </div>
    <span class="num num-cur">1</span>
    <div class="player">
      <svg class="pic"><use href="#p-start"/></svg><svg class="pic"><use href="#p-prev"/></svg><svg class="pic"><use href="#p-pk"/></svg><svg class="pic"><use href="#p-back"/></svg><svg class="pic"><use href="#p-play"/></svg><svg class="pic"><use href="#p-nk"/></svg><svg class="pic"><use href="#p-next"/></svg><svg class="pic"><use href="#p-end"/></svg>
    </div>
  </div>

  <div class="rangerow">
    <i class="grip gs1"></i>
    <span class="num">1</span><span class="num">1</span>
    <div class="range">
      <div class="rslider"><i class="rh"></i><span class="r1">1</span><span class="r2">120</span><i class="rh"></i></div>
    </div>
    <span class="num">120</span><span class="num">200</span>
    <i class="tsep rs1"></i><i class="tri-o"></i>
    <div class="box box-char">无角色集</div>
    <i class="tri-o tri2"></i>
    <div class="box box-char">无动画层</div>
    <i class="tsep rs2"></i>
    <div class="drop drop-fps"><span class="drop-t">24 fps</span><i class="drop-a"></i></div>
    <svg class="ric loop"><use href="#p-loop"/></svg><i class="tsep rs3"></i><svg class="ric"><use href="#p-clock"/></svg><svg class="ric"><use href="#p-run"/></svg>
  </div>

  <div class="melrow">
    <i class="grip gs2"></i>
    <span class="mel">MEL</span>
    <div class="mel1"></div>
    <div class="mel2"></div>
    <svg class="mscr"><use href="#p-script"/></svg>
  </div>

  <div class="statusrow">
    <i class="grip gs2"></i>
    <span class="stat">移动工具: 使用操纵器移动对象。按住 Ctrl + 鼠标中键并拖动以沿法线移动组件。按住 Shift 键并拖动操纵器轴或平面控制柄以挤出组件或克隆对象。按住 Ctrl + Shift + 鼠标左键并拖动以将移动约束到连接边。使用 D 或 Insert 键更改枢轴位置和轴方向。</span>
  </div>

  <footer class="taskbar">
    <i class="orb"></i><i class="tb-ic o1"></i><i class="tb-ic o2"></i>
    <i class="tb-btn b1"></i><i class="tb-btn b2"></i><i class="tb-btn b3"></i>
    <span class="clock">17:47</span>
  </footer>
</div>
</body>
</html>
```

FILE: styles.css
```css
*{box-sizing:border-box}
html,body{margin:0;padding:0;height:100%;overflow:hidden}
body{background:#3a3a3a;color:#bdbdbd;font:12px/1 "Noto Sans","Noto Sans CJK SC",sans-serif}
i{display:block;font-style:normal;flex:none}
svg{flex:none;display:block}
.defs{position:absolute;width:0;height:0}
.app{width:1920px;height:1048px;display:flex;flex-direction:column}

/* svg paints */
.o{fill:#dd9650}.os{fill:none;stroke:#dd9650;stroke-width:7}
.ot{fill:none;stroke:#dd9650;stroke-width:1.500}
.d{fill:none;stroke:#444;stroke-width:1.200}.d2{fill:none;stroke:#444;stroke-width:2}
.w{fill:#c6c6c6}.ws{fill:none;stroke:#c6c6c6;stroke-width:1.500}.w3{fill:none;stroke:#c6c6c6;stroke-width:3}
.w4{fill:#222;stroke:none}
.dk{fill:#444}.t{fill:#3fa1b0}.t2{fill:none;stroke:#3fa1b0;stroke-width:1.500}.t2b{fill:#444;stroke:#3fa1b0;stroke-width:2}
.t2d{fill:none;stroke:#3fa1b0;stroke-width:1.500;stroke-dasharray:2 1.500}
.t3{fill:none;stroke:#3fa1b0;stroke-width:2.500}.t3b{fill:#3fa1b0}
.ta{fill:none;stroke:#7fd2de;stroke-width:1.500}
.td{fill:none;stroke:#3fa1b0;stroke-width:2.500;stroke-dasharray:5 3}
.g{fill:#5aaf8b}.gs{fill:none;stroke:#5aaf8b;stroke-width:3}.gs3{fill:none;stroke:#5aaf8b;stroke-width:4}
.g5{fill:#666}.t5{fill:#3f5a60}
.rc{fill:#a01c1c;stroke:#e8e8e8;stroke-width:1}.rd{fill:#d33}.rl{fill:none;stroke:#e03a3a;stroke-width:1.500}
.pg{fill:#eee}.bf{fill:#3a6fd0}
.or{fill:#e07a30}.ors{fill:none;stroke:#e07a30;stroke-width:2}
.iprt{font:bold 8px "Liberation Sans",sans-serif;fill:#444}
.vtt{font:bold 12px "Liberation Sans",sans-serif;fill:#3fa1b0}
.vtk{font:bold 9px "Liberation Sans",sans-serif;fill:#333}
.ont{font:bold 6px "Liberation Sans",sans-serif;fill:#222}
.gr{fill:none;stroke:#c6c6c6;stroke-width:3;stroke-dasharray:2 1}
.fr{fill:none;stroke:#666;stroke-width:2}
.mt{fill:#1a9aa0}
.ml1{fill:#5fb5bf}.ml2{fill:#0f9aa4}

/* title */
.titlebar{height:21px;flex:none;display:flex;align-items:center;border-bottom:1px solid #fbe6b8;color:#111;font:13px/1 "Liberation Sans",sans-serif;padding-left:2px;
background:
 radial-gradient(ellipse 45px 22px at 665px 0,#d98f24 0,#d98f2400 100%),
 radial-gradient(ellipse 90px 26px at 844px 2px,#d98e20 0,#d98e20 55%,#d98e2000 100%),
 radial-gradient(ellipse 38px 20px at 995px 10px,#e2a032 0,#e2a03200 100%),
 radial-gradient(ellipse 40px 14px at 1130px 12px,#eab45a 0,#eab45a00 100%),
 radial-gradient(ellipse 50px 22px at 1223px 0,#dd9a2c 0,#dd9a2c00 100%),
 radial-gradient(ellipse 40px 24px at 1455px 0,#e2a030 0,#e2a03000 100%),
 radial-gradient(ellipse 40px 22px at 1688px 5px,#e2a030 0,#e2a03000 100%),
 radial-gradient(ellipse 50px 22px at 1800px 3px,#e2a030 0,#e2a03000 100%),
 linear-gradient(90deg,#e9dcba 0,#f6dda0 25%,#fccb77 32%,#fccb77 100%)}
.mlogo-s{width:14px;height:16px;margin-right:5px}
.wintitle{white-space:pre}
.winbtns{margin-left:auto;display:flex;height:18px;margin-top:-3px;margin-right:5px;border:1px solid #8a6a3a;border-top:0;border-radius:0 0 4px 4px;overflow:hidden}
.wb{display:flex;align-items:center;justify-content:center;height:100%}
.wb-min,.wb-max{width:28px;background:linear-gradient(#d8c8a4,#b0a078);border-right:1px solid #8a7a5a}
.wb-close{width:44px;background:linear-gradient(#d87a60,#b5301a);color:#fff;font-weight:bold;font-size:13px}
.gmin{width:11px;height:5px;background:#fff;border:1px solid #444}
.gmax{width:10px;height:11px;background:#e6e6e6;border:1px solid #444;box-shadow:inset 0 0 0 2px #b5a883}

/* menu */
.menubar{height:25px;flex:none;background:#444;display:flex;align-items:center;gap:15px;padding-left:9px;color:#c4c4c4}
.wsp{margin-left:auto;display:flex;align-items:center}
.wsp-l{color:#aaa;margin-right:9px}
.ic-lock{width:20px;height:20px;margin:0 5px 0 3px}

/* drop / boxes */
.drop{display:flex;align-items:stretch;background:#585858;color:#aaa;height:22px}
.drop-t{flex:1;display:flex;align-items:center;padding-left:4px}
.drop-a{width:20px;background:#666;position:relative}
.drop-a::after,.drop-tri{content:"";position:absolute;left:5px;top:8px;border:5px solid transparent;border-top:6px solid #c4c4c4;border-bottom:0}
.drop-a.flat{background:transparent}
.drop-ws{width:170px}
.drop-mode{width:98px;border-radius:1px}
.drop-mode .drop-t{font-size:14px}
.drop-login{width:120px;color:#ddd;height:22px}
.drop-login .drop-t{padding-left:2px;font-size:13px}
.ulogin{width:20px;height:20px;margin:1px 0 0 4px}
.drop-srgb{width:177px;height:18px;margin-left:3px;font-size:12px}
.drop-srgb .drop-a::after{top:6px}
.drop-fps{width:103px;height:22px}
.box{border:1px solid #4e4e4e;background:#414141;color:#bbb;height:20px;display:flex;align-items:center;padding-left:4px;border-radius:2px}

/* toolbar */
.toolbar{height:30px;flex:none;background:#444;display:flex;align-items:center;position:relative}
.grip{width:14px;height:24px;background:radial-gradient(circle,#777 0,#777 50%,transparent 51%) 3px 0/3px 3px;background-repeat:repeat-y}
.tsep{width:3px;height:22px;background:#6a6a6a;margin:0 10px;border-radius:1px}
.tsep-w{margin:0 12px}
.tsep-a{margin:0 12px 0 15px}
.tsep-b{margin:0 10px 0 12px}
.tarr{width:20px;height:22px;position:relative}
.tarr::after{content:"";position:absolute;left:8px;top:2px;border:9px solid transparent;border-left:5px solid #6a6a6a;border-right:0}
.tarr-s{margin-left:3px}
.tic{width:23px;height:26px;padding:4px 3px}
.tic.on{background:#5285a6}
.ttri{width:14px;height:6px;position:relative}
.ttri::after{content:"";position:absolute;left:3px;top:0;border:4px solid transparent;border-top:6px solid #777;border-bottom:0}
.box-live{width:95px;margin-left:4px}
.box-sym{width:99px;margin-left:2px}
.tright{margin-left:auto;margin-right:3px;display:flex;align-items:center}
.uic{width:24px;height:24px;padding:3px}
.uic.nar{width:22px;padding:2px}
.uic.on{background:#5285a6;height:26px}

/* shelf */
.shelfwrap{height:74px;flex:none;display:flex;background:#3a3a3a;padding:5px 0 4px 14px}
.shelfctl{width:20px;background:#393939;display:flex;flex-direction:column;align-items:center;justify-content:space-between;padding:11px 0 9px}
.dash{width:10px;height:4px;background:#aaa}
.gearmini{width:14px;height:14px}
.shelfmain{flex:1;margin-left:1px;display:flex;flex-direction:column}
.tabs{height:20px;flex:none;background:#373737;display:flex;align-items:flex-end;padding-left:4px}
.tab{height:19px;background:#3d3d3d;color:#858585;display:flex;align-items:center;justify-content:center;border-radius:3px 3px 0 0;border:1px solid #333;border-bottom:0;flex:none;font-size:12px}
.tab.act{background:#444;color:#ddd;height:20px;border:0}
.ml{margin-left:3px}
.t74{width:74px}.t82{width:82px;margin-left:2px}.t44{width:44px}.t46{width:46px}.t35{width:35px}.t62{width:62px}.t58{width:58px}.t60{width:60px}.t68{width:68px}.t52{width:52px}
.shelf{height:45px;flex:none;background:#444;display:flex;align-items:center;padding:0 6px 3px;position:relative}
.sic{width:35px;height:34px;padding:1.500px 2px}
.sic-t{width:35px;height:38px;display:flex;align-items:center;justify-content:center;flex:none}
.bigT{font:36px/1 "Liberation Serif",serif;color:#dd9650}
.svgbox{background:#dd9650;color:#444;font:bold 12px/1 "Liberation Mono",monospace;width:23px;height:26px;display:flex;align-items:center;justify-content:center}
.lab{position:relative}
.zero{position:absolute;left:2px;right:2px;bottom:1px;background:#333;color:#3fa1b0;font-size:11px;text-align:center;line-height:13px;border-radius:1px}
.slabel{position:absolute;left:2px;right:1px;bottom:0;height:15px;background:#2b2b2b;color:#ddd;font-size:12px;display:flex;align-items:center;justify-content:center;border-radius:2px}
.ssep{width:3px;height:35px;background:#7a7a7a;margin:0 5px}
.ssep-m{margin:0 3.500px}
.ssep-n{margin:0 4px}
.shelfscroll{margin-left:auto;width:11px;height:36px;background:#393939;display:flex;flex-direction:column;align-items:center;justify-content:space-between;padding:3px 0}
.sup{border:5px solid transparent;border-bottom:5px solid #c4c4c4;border-top:0;width:0;height:0;flex:none}
.sdn{border:5px solid transparent;border-top:5px solid #c4c4c4;border-bottom:0;width:0;height:0;flex:none}
.sdot{width:9px;height:9px;border-radius:50%;background:#666}

/* main */
.main{height:753px;flex:none;display:flex;background:#383838}
.toolbox{width:44px;flex:none;background:#444;display:flex;flex-direction:column;align-items:center;position:relative;padding-top:3px}
.hgrip{width:36px;height:6px;margin-bottom:3px;background:radial-gradient(circle,#777 0,#777 50%,transparent 51%) 0 0/3px 3px repeat-x}
.lic{width:36px;height:36px;padding:1px;margin-bottom:1px}
.lic.on{background:#5285a6}
.lsep{width:36px;height:2px;background:#888;margin:79px 0 7px}
.lay{width:30px;height:30px;margin-bottom:7px}
.lay.on{width:36px;height:36px;padding:3px;background:#5285a6;margin-top:-3px}
.mlogo{position:absolute;left:6px;bottom:7px;width:32px;height:30px}
.outliner{width:265px;flex:none;margin:2px 3px 0 3px;display:flex;flex-direction:column}
.otab-row{height:18px;flex:none}
.otab{display:flex;width:70px;height:18px;background:#444;color:#ddd;align-items:center;justify-content:center;font-size:13px;border-radius:3px 3px 0 0;margin-left:1px}
.opanel{flex:1;background:#444;display:flex;flex-direction:column;padding-left:3px;padding-right:4px}
.pmenu{display:flex;gap:15px;align-items:center;color:#c0c0c0;flex:none}
.omenu{height:26px;padding-left:7px}
.osearch{height:24px;display:flex;align-items:center;flex:none}
.osi{width:16px;height:16px;margin:0 6px 0 4px}
.oinput{width:228px;height:21px;background:#2b2b2b;color:#666;display:flex;align-items:center;padding-left:3px;position:relative;font-size:12px;border-radius:2px}
.oinput .drop-tri{left:auto;right:4px;top:8px}
.olistwrap{height:662px;flex:none;display:flex;margin-top:1px}
.olist{list-style:none;margin:0;padding:0;width:244px;background:#373737;flex:none}
.olist li{height:20px;display:flex;align-items:center;padding-left:33px;font-size:12px;color:#b9b9b9;white-space:nowrap}
.olist li.dim{color:#5f5f5f}
.olist li.exp{padding-left:20px}
.olist li.sel{background:#5285a6;color:#eee}
.oic{width:16px;height:16px;margin:0 4px 0 3px}
.plus{width:9px;height:9px;border:1px solid #999;margin-right:4px;background:linear-gradient(#bbb,#bbb) center/5px 1px no-repeat,linear-gradient(#bbb,#bbb) center/1px 5px no-repeat}
.vscroll{width:12px;background:#373737;display:flex;flex-direction:column;align-items:center;padding-top:3px}
.vthumb{width:10px;flex:1;margin:3px 0 10px;background:#5e5e5e;border-radius:5px}
.hscroll{display:flex;align-items:center;height:12px;background:#373737;flex:none}
.hs-o{margin-top:1px;padding:0 4px;width:254px}
.harrl,.harrr{border:5px solid transparent;width:0;height:0}
.harrl{border-right:6px solid #aaa;border-left:0}
.harrr{border-left:6px solid #aaa;border-right:0;margin-left:auto}
.hthumb{height:10px;background:#5e5e5e;border-radius:5px;margin-left:4px}
.hs-o .hthumb{width:219px}
.hs-l .hthumb{width:154px;margin-left:2px}

.viewport{width:1318px;flex:none;margin:3px 5px 3px 0;border:1px solid #7f7f7f;display:flex;flex-direction:column;background:#444}
.vmenu{height:22px;padding-left:8px}
.vtools{height:20px;display:flex;align-items:center;flex:none;padding-left:3px}
.vsep{width:2px;height:15px;background:#6a6a6a;margin:0 5px}
.vs0{margin-left:0}
.vsm{margin-right:3px}
.vic{width:19px;height:20px;padding:1px}
.vic.on{background:#5285a6}
.vic.drk{background:#333}
.vic.drk2{background:#333}
.vnum{width:37px;height:18px;background:#2b2b2b;color:#bbb;display:flex;align-items:center;justify-content:center;border-radius:2px;font-size:12px;margin-left:1px;flex:none}
.von{margin-left:5px}
.canvas{width:1316px;height:703px;flex:none}
.vbg{fill:#5c5c5c}
.gl{fill:none;stroke:#464646;stroke-width:1;shape-rendering:crispEdges}
.gt{fill:none;stroke:#414141;stroke-width:2.500}
.body{fill:url(#gbody)}
.wall{fill:#9c9c9c}
.blk{fill:#111}
.sidef{fill:#7c7c7c;opacity:.55}
.gw,.bw,.bw2{fill:none;vector-effect:non-scaling-stroke;shape-rendering:crispEdges}
.gw{stroke:#45f5a8;stroke-width:1}
.gdot{fill:#45f5a8}
.bw{stroke:#0a0f80;stroke-width:1}
.bw2{stroke:#0a0f80;stroke-width:1.500}
.bdot{fill:#0a0f80}
.bs{fill:#4a4fa0;stroke:#2f33b0;stroke-width:1}
.xl{fill:none;stroke:#e01010;stroke-width:2}
.xc{fill:#c01010}
.yc{fill:#3fae3f;stroke:#2f8f2f}
.ax-y{stroke:#ddd;stroke-width:1}.ax-x{stroke:#e02020;stroke-width:2}.ax-z{stroke:#2030e0;stroke-width:2}
.axy{fill:#3fc03f;font:11px "Liberation Sans",sans-serif}
.axx{fill:#e02020;font:11px "Liberation Sans",sans-serif}
.axz{fill:#2030e0;font:11px "Liberation Sans",sans-serif}
.persp{fill:#eee;font:bold 10px "Liberation Sans",sans-serif}

/* channel box */
.channel{width:260px;flex:none;background:#444;margin:0 3px 0 0;display:flex;flex-direction:column;padding:0 1px 0 4px}
.ctop{height:20px;flex:none;display:flex;justify-content:flex-end;align-items:center;gap:3px;padding-right:2px;margin-top:1px}
.cti{width:18px;height:18px}
.cmenu{height:29px;padding-left:8px}
.cbody{height:478px;flex:none;display:flex}
.clist{flex:none;width:243px;padding-left:2px;overflow:hidden}
.objname,.node{font:bold 11.500px/16px "Liberation Mono",monospace;color:#b5b5b5;height:16px}
.attr{height:16px;display:flex;justify-content:flex-end;align-items:center;margin-right:2px}
.attr-l{color:#b0b0b0;margin-right:8px;font-size:12px;white-space:pre}
.attr-l b{font:bold 10px "Liberation Mono",monospace}
.attr-v{width:74px;height:15px;background:#2b2b2b;color:#b5b5b5;display:flex;align-items:center;padding-left:9px;border-radius:1px;font-size:12px}
.chead{height:16px;font-weight:bold;font-size:12px;color:#bbb;display:flex;align-items:center}
.node{padding-left:21px}
.shape{background:#383838;margin-right:2px}
.cscroll{width:11px;flex:none;background:#373737;display:flex;flex-direction:column;align-items:center;padding:3px 0 4px}
.cthumb{width:10px;height:120px;background:#5e5e5e;border-radius:5px;margin-top:3px;margin-bottom:auto}
.cgrip{height:3px;width:85px;margin:2px 0 7px 85px;background:radial-gradient(circle,#777 0,#777 50%,transparent 51%) 0 0/3px 3px repeat-x}
.layers{width:256px;height:208px;background:#373737;display:flex;flex-direction:column;flex:none}
.ltabs{height:20px;display:flex;align-items:flex-end;padding-left:2px;gap:3px;flex:none}
.ltab{width:45px;height:18px;display:flex;align-items:center;justify-content:center;color:#777;background:#3d3d3d;border:1px solid #333;border-bottom:0;border-radius:3px 3px 0 0;font-size:13px}
.ltab.act{background:#444;color:#ddd;border:0}
.lbody{background:#444;flex:1;display:flex;flex-direction:column;margin:0 1px 2px;padding:0 3px}
.lmenu{height:24px;padding-left:8px}
.lics{height:26px;display:flex;align-items:center;justify-content:flex-end;flex:none;gap:6px;padding-right:4px}
.lli{width:16px;height:12px}
.lli.gap{margin-left:6px}
.llist{height:122px;flex:none;background:#2b2b2b;width:248px;margin-left:1px}
.hs-l{width:248px;margin-left:1px;padding:0 5px}

.sidetabs{flex:none;width:20px;display:flex;flex-direction:column;gap:3px;padding-top:3px}
.stab{writing-mode:vertical-rl;width:18px;display:flex;align-items:center;justify-content:center;color:#727272;background:#3e3e3e;border-radius:0 3px 3px 0;font-size:12.500px;letter-spacing:-1.500px;white-space:nowrap}
.stab.act{background:#4a4a4a;color:#9fd0e8}
.s1{height:109px}.s2{height:80px}.s3{height:80px}

/* time */
.timerow{height:37px;flex:none;background:#444;display:flex;align-items:center;border-top:3px solid #383838}
.gs1{width:13px}
.track{width:1612px;height:28px;background:#2b2b2b;display:flex;flex:none}
.tfirst{width:62px;flex:none;padding-left:9px}
.curf{display:flex;width:11px;height:28px;background:#555;color:#eee;align-items:center;justify-content:center;padding-top:8px;font-size:12px}
.tc{width:66.500px;flex:none;display:flex;flex-direction:column;color:#7e7e7e;font-size:12px}
.tc span{height:17px;padding-left:2px;display:flex;align-items:center;white-space:nowrap}
.tc i{width:1px;height:11px;background:#9a9a9a}
.tc-last{width:21px;font-size:11px}
.tc-last span{padding-left:1px}
.num{width:88px;height:27px;background:#2b2b2b;color:#c0c0c0;display:flex;align-items:center;padding-left:5px;flex:none;margin-right:8px;border-radius:2px}
.num-cur{height:21px;margin-left:8px}
.player{display:flex;align-items:center;margin-left:-2px}
.pic{width:23px;height:18px;padding:2px 5px}

.rangerow{height:41px;flex:none;background:#444;display:flex;align-items:center;border-top:3px solid #383838}
.gs1+.num{margin-left:1px}
.range{width:1013px;height:27px;background:#4b4b4b;margin:0 7px 0 -1px;display:flex;align-items:center;padding-left:6px;flex:none}
.rslider{width:609px;height:22px;background:#5c5c5c;display:flex;align-items:center;padding:0 2px;border-radius:2px;color:#bbb}
.rh{width:16px;height:18px;background:#8e8e8e;border-radius:4px}
.r1{margin-left:4px}
.r2{margin-left:auto;margin-right:5px}
.rs1{margin:0 13px 0 -3px;height:20px}
.tri-o{width:9px;height:8px;flex:none;clip-path:polygon(0 0,100% 0,50% 100%);background:#8a8a8a;margin-right:7px}
.box-char{width:102px;height:26px;background:#414141}
.tri2{margin-left:10px;margin-right:7px}
.rs2{margin:0 12px 0 10px;height:20px}
.drop-fps .drop-t{padding-left:4px}
.ric{width:20px;height:20px;margin-left:12px;padding:1px}
.loop{margin-left:12px}
.rs3{margin:0 0 0 10px;height:22px}
.rs3+.ric{margin-left:9px}

.melrow{height:31px;flex:none;background:#444;display:flex;align-items:center;border-top:3px solid #383838;position:relative}
.gs2{width:14px;height:22px}
.mel{color:#ddd;margin-left:9px;width:36px;font-size:12px}
.mel1{width:449px;height:22px;background:#2b2b2b;border-radius:2px}
.mel2{width:1371px;height:24px;background:#2b2b2b;margin-left:8px}
.mscr{width:18px;height:18px;margin-left:6px}

.statusrow{height:29px;flex:none;background:#444;display:flex;align-items:center;border-top:3px solid #383838}
.stat{margin-left:10px;font-size:11px;color:#a6a6a6;white-space:nowrap}

.taskbar{height:7px;flex:none;display:flex;overflow:hidden;position:relative;
background:linear-gradient(90deg,#6d6d5f 0,#7d7a63 19%,#a9791f 19.200%,#d99b2c 35%,#e6b355 50%,#cb8b1f 65%,#e4a73a 80%,#b89a5e 92%,#807a66 100%)}
.orb{width:28px;height:28px;border-radius:50%;background:#d6dde6;margin:0 0 0 12px;border:2px solid #567}
.tb-ic{width:24px;height:24px;border-radius:50%}
.o1{margin-left:40px;background:#e8c04a}
.o2{margin-left:34px;background:#2e7ed0}
.tb-btn{height:12px;background:#f1e6cb;border:1px solid #6a5a3a;border-radius:2px}
.b1{width:58px;margin-left:22px}
.b2{width:55px;margin-left:3px}
.b3{width:59px;margin-left:7px}
.clock{margin-left:auto;margin-right:36px;color:#eee;font:7px/7px "Liberation Sans",sans-serif}
```
